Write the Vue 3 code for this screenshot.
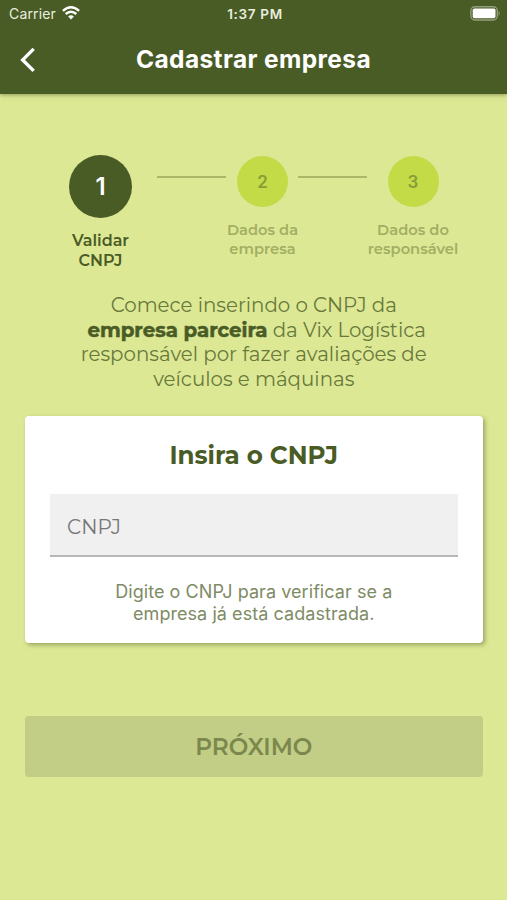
<script setup>
const steps = [
  { number: 1, lines: ['Validar', 'CNPJ'], active: true },
  { number: 2, lines: ['Dados da', 'empresa'], active: false },
  { number: 3, lines: ['Dados do', 'responsável'], active: false },
]
</script>

<template>
  <div class="screen">
    <header class="header">
      <div class="status">
        <div class="carrier">
          <span class="carrier-name">Carrier</span>
          <svg class="wifi" viewBox="0 0 18 14" width="18" height="14">
            <path d="M0.9 4.9Q9-2.2 17.1 4.9" />
            <path d="M3.7 8Q9 3.3 14.3 8" />
            <path class="dot" d="M6.1 10.5Q9 8 11.9 10.5L9 13.6Z" />
          </svg>
        </div>
        <span class="time">1:37 PM</span>
        <svg class="battery" viewBox="0 0 31 15" width="31" height="15">
          <rect class="shell" x="0.9" y="0.8" width="26.4" height="13.2" rx="4" />
          <rect class="charge" x="2.7" y="2.6" width="22.8" height="9.6" rx="1.6" />
          <path class="tip" d="M28.6 5Q31 7.4 28.6 9.8Z" />
        </svg>
      </div>
      <div class="nav">
        <svg class="back" viewBox="0 0 16 26" width="16" height="26">
          <path d="M13.7 1.9L2.7 12.9L13.7 23.9" />
        </svg>
        <h1 class="title">Cadastrar empresa</h1>
      </div>
    </header>

    <main class="content">
      <div class="stepper">
        <template v-for="step in steps" :key="step.number">
          <i v-if="step.number > 1" class="connector"></i>
          <div class="step" :class="{ active: step.active }">
            <span class="circle">{{ step.number }}</span>
            <span class="label">
              <span v-for="line in step.lines" :key="line" class="line">{{ line }}</span>
            </span>
          </div>
        </template>
      </div>

      <p class="intro">
        <span class="line">Comece inserindo o CNPJ da</span>
        <span class="line partner"><b>empresa parceira</b> da Vix Logística</span>
        <span class="line">responsável por fazer avaliações de</span>
        <span class="line">veículos e máquinas</span>
      </p>

      <section class="card">
        <h2 class="card-title">Insira o CNPJ</h2>
        <div class="field"><span>CNPJ</span></div>
        <p class="hint">
          <span class="line">Digite o CNPJ para verificar se a</span>
          <span class="line">empresa já está cadastrada.</span>
        </p>
      </section>

      <button class="next" disabled>PRÓXIMO</button>
    </main>
  </div>
</template>

<style>
body {
  margin: 0;
  background: #dde895;
}
</style>

<style scoped>
.screen {
  width: 507px;
  height: 900px;
  overflow: hidden;
  background: #dde895;
  color: #4a5c26;
  font-family: Montserrat, Inter, sans-serif;
}
.line {
  display: block;
  white-space: nowrap;
}
.header {
  height: 94px;
  background: #4a5c26;
  color: #fff;
  box-shadow: 0 1px 4px rgba(60, 75, 25, 0.5);
  font-family: Inter, sans-serif;
}
.status {
  display: grid;
  grid-template-columns: 1fr auto 1fr;
  align-items: center;
  height: 27px;
  padding: 0 6px 0 9px;
  color: #e9eedf;
}
.carrier {
  display: flex;
  align-items: center;
  gap: 6px;
}
.carrier-name {
  width: 47px;
  font-size: 14px;
  letter-spacing: 0.15px;
}
.wifi {
  margin-top: -1px;
  fill: none;
  stroke: #fff;
  stroke-width: 2.4;
}
.wifi .dot {
  fill: #fff;
  stroke: none;
}
.time {
  font-size: 13.5px;
  font-weight: 600;
  letter-spacing: 0.65px;
}
.battery {
  justify-self: end;
}
.shell {
  fill: none;
  stroke: #929d7c;
  stroke-width: 1.4;
}
.charge {
  fill: #fff;
}
.tip {
  fill: #929d7c;
}
.nav {
  display: grid;
  grid-template-columns: 40px 1fr 40px;
  align-items: center;
  height: 65px;
}
.back {
  margin-left: 20px;
  fill: none;
  stroke: #fff;
  stroke-width: 3.4;
}
.title {
  margin: 0 0 2px;
  text-align: center;
  font-size: 24.5px;
  font-weight: 700;
  letter-spacing: 0.37px;
  line-height: 30px;
}
.content {
  padding: 61px 24.5px 0 25px;
}
.stepper {
  display: grid;
  grid-template-columns: 63px 105px 51px 99.5px 51px;
  height: 138px;
  padding-left: 44px;
}
.step {
  display: flex;
  flex-direction: column;
  align-items: center;
  padding-top: 1px;
  color: #a2af62;
}
.step.active {
  padding-top: 0;
  color: #4a5c26;
}
.circle {
  display: flex;
  align-items: center;
  justify-content: center;
  width: 51px;
  height: 51px;
  border-radius: 50%;
  background: #c3db47;
  color: #889e36;
  font: 600 17px Inter, sans-serif;
}
.active .circle {
  width: 63px;
  height: 63px;
  background: #4a5c26;
  color: #fff;
  font-size: 24px;
  font-weight: 600;
}
.label {
  margin-top: 14px;
  text-align: center;
  font-size: 14.7px;
  font-weight: 600;
  line-height: 18.5px;
}
.active .label {
  margin-top: 13px;
  font-size: 16px;
  line-height: 19.5px;
}
.connector {
  width: 69px;
  height: 2px;
  margin: 21px 0 0 25px;
  background: #acb867;
}
.connector:nth-of-type(2) {
  margin-left: 10px;
}
.intro {
  margin: 0;
  text-align: center;
  font-size: 19.8px;
  line-height: 24.5px;
  color: #68793b;
}
.intro .partner {
  padding-left: 6px;
}
.intro b {
  font-weight: 700;
  -webkit-text-stroke: 0.5px #4a5c26;
  color: #4a5c26;
}
.card {
  height: 227px;
  margin-top: 25px;
  box-sizing: border-box;
  padding: 25px 25px 0;
  background: #fff;
  border-radius: 4px;
  box-shadow: 2px 2px 4px rgba(70, 85, 30, 0.45);
}
.card-title {
  margin: 0;
  text-align: center;
  font-size: 24.6px;
  font-weight: 700;
  line-height: 29px;
}
.field {
  display: flex;
  align-items: center;
  height: 63px;
  margin-top: 24px;
  padding: 4px 17px 0;
  box-sizing: border-box;
  background: #f0f0f0;
  border-bottom: 2px solid #b8b8b8;
  color: #777;
  font-size: 20px;
}
.hint {
  margin: 24px 0 0;
  text-align: center;
  font-family: Inter, sans-serif;
  font-size: 18px;
  letter-spacing: 0.06px;
  line-height: 22px;
  color: #7e8b65;
}
.next {
  display: block;
  width: 100%;
  height: 61px;
  margin-top: 73px;
  padding: 0;
  border: 0;
  border-radius: 4px;
  background: #c2cd86;
  color: #7b884d;
  font: 600 23.2px Montserrat, Inter, sans-serif;
}
</style>
